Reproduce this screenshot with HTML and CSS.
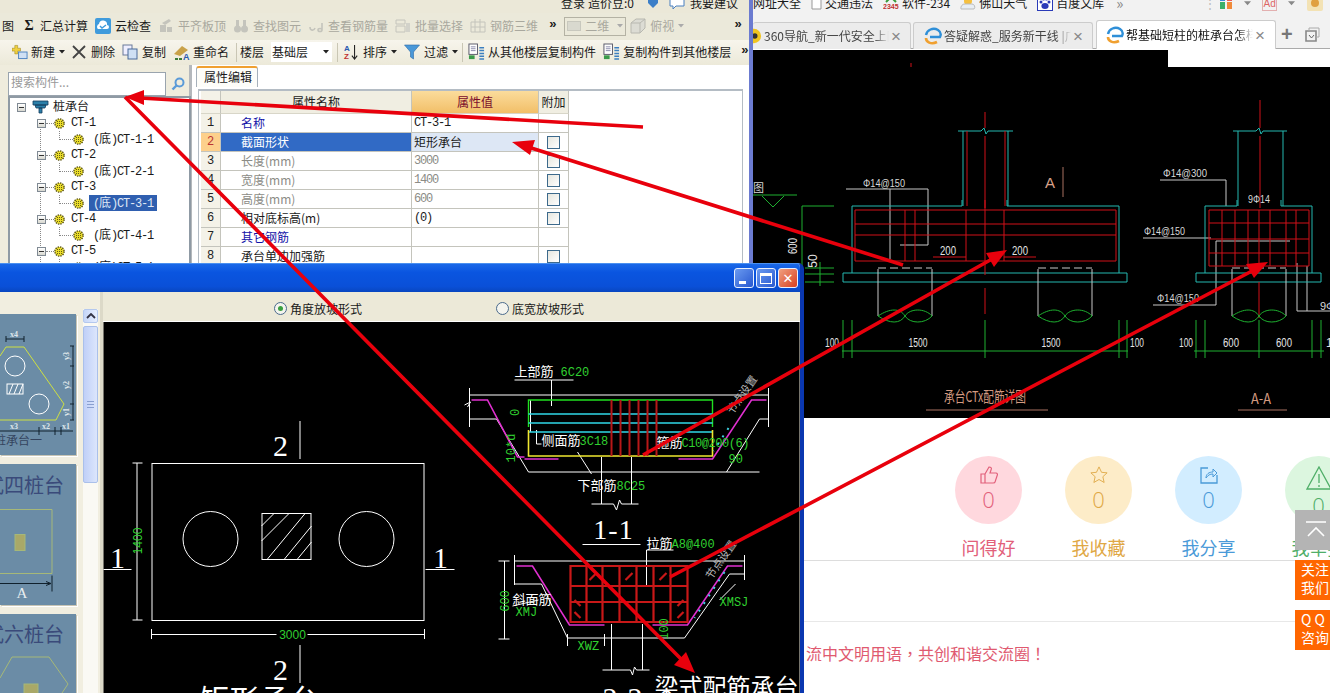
FILE: index.html
```html
<!DOCTYPE html>
<html lang="zh">
<head>
<meta charset="utf-8">
<title>桩承台</title>
<link rel="stylesheet" href="styles.css">
</head>
<body>
<svg class="defs" aria-hidden="true">
  <symbol id="gear" viewBox="0 0 11 11"><circle cx="5.5" cy="5.5" r="4.6" fill="#e9dc2a" stroke="#5a5212" stroke-width="1.4" stroke-dasharray="1.4 1"/><path d="M3 3.5h5M3 5.5h5M3 7.5h5M3.5 3v5M5.5 3v5M7.5 3v5" stroke="#5a5212" stroke-width=".7" stroke-dasharray="1 1"/></symbol>
  <symbol id="ie" viewBox="0 0 18 18"><path d="M2 8C3 3 9 0 14 3c3 2 3 5 2 7H6" fill="none" stroke="#2f8fd8" stroke-width="2.4"/><path d="M2 11c0 4 5 7 11 4" fill="none" stroke="#f0a030" stroke-width="2.6"/></symbol>
  <symbol id="caret" viewBox="0 0 6 4"><path d="M0 0h6L3 3.5z" fill="#222"/></symbol>
  <symbol id="copyfloor" viewBox="0 0 18 20"><rect x="1" y="1" width="9" height="11" fill="#fff" stroke="#556"/><path d="M3 4h5M3 6h5M3 8h5" stroke="#88a"/><rect x="1" y="13" width="6" height="4" fill="#3a9a4a"/><path d="M12 5h5M12 8h5M12 11h5M12 14h5M12 17h5" stroke="#3c7fc0" stroke-width="1.6"/></symbol>
</svg>

<section class="app-window">
  <div class="app-strip">
    <div class="app-strip-row">
      <span>登录</span><span class="strip-cost">造价豆:0</span>
      <svg class="strip-ic" viewBox="0 0 12 12"><path d="M1 1h10v5l-5 5-5-5z" fill="#3c7fc8"/></svg>
      <svg class="strip-ic2" viewBox="0 0 16 14"><path d="M1 1h14v9H7l-3 3v-3H1z" fill="#fff" stroke="#4a80c0"/></svg>
      <span>我要建议</span>
    </div>
  </div>

  <div class="tb tb-one">
    <span class="t-first">图</span>
    <span class="ti"><b class="sigma">Σ</b>汇总计算</span>
    <span class="ti"><svg class="i16" viewBox="0 0 16 16"><rect width="16" height="16" rx="2" fill="#3f9bdc"/><path d="M3 11a3 3 0 0 1 1-5 4 4 0 0 1 8 1 2 2 0 0 1 0 4z" fill="#fff"/><path d="M5 8l2 2 4-3" fill="none" stroke="#3f9bdc" stroke-width="1.4"/></svg>云检查</span>
    <span class="ti off"><svg class="i16" viewBox="0 0 16 16"><path d="M2 14V7h6v7zM9 14V9h5v5zM4 5l7-4 2 2-6 4z" fill="#c4c4bc"/></svg>平齐板顶</span>
    <span class="ti off"><svg class="i16" viewBox="0 0 16 16"><circle cx="4.5" cy="11" r="3.5" fill="#c4c4bc"/><circle cx="11.5" cy="11" r="3.5" fill="#c4c4bc"/><rect x="3" y="2" width="3" height="7" fill="#c4c4bc"/><rect x="10" y="2" width="3" height="7" fill="#c4c4bc"/></svg>查找图元</span>
    <span class="ti off"><svg class="i16" viewBox="0 0 16 16"><path d="M2 9c0 4 4 4 5 1M14 5v7c0 2-4 2-4 0s4-2 4 0" fill="none" stroke="#c4c4bc" stroke-width="1.6"/></svg>查看钢筋量</span>
    <span class="ti off"><svg class="i16" viewBox="0 0 16 16"><path d="M1 2h9v4H1zM1 8h9v6H1z" fill="none" stroke="#c4c4bc"/><path d="M11 5h4v9h-4z" fill="#d2d2ca"/></svg>批量选择</span>
    <span class="ti off"><svg class="i16" viewBox="0 0 16 16"><path d="M1 4h14v10H1zM5 1v13M10 1v13M1 9h14" fill="none" stroke="#c4c4bc"/></svg>钢筋三维</span>
    <span class="chev chev-a">»</span>
    <span class="combo-2d off"><i class="swatch"></i>二维<svg class="car" viewBox="0 0 6 4"><path d="M0 0h6L3 3.5z" fill="#aaa"/></svg></span>
    <span class="ti off ti-view"><svg class="i16" viewBox="0 0 16 16"><path d="M1 5l5-4h9v9l-5 5H1zM1 5h9v10M10 5l5-4" fill="#dcdcd4" stroke="#b8b8b0"/></svg>俯视<svg class="car" viewBox="0 0 6 4"><path d="M0 0h6L3 3.5z" fill="#aaa"/></svg></span>
    <span class="chev chev-b">»</span>
  </div>

  <div class="tb tb-two">
    <span class="ti ti-new"><svg class="i16" viewBox="0 0 17 16"><path d="M3 1h3v3h3v3H6v3H3V7H0V4h3z" fill="#f0d040" stroke="#a08a20" stroke-width=".6"/><rect x="7" y="8" width="9" height="7" fill="#cfe0f4" stroke="#4a80c0"/></svg>新建<svg class="car" viewBox="0 0 6 4"><use href="#caret"/></svg></span>
    <span class="ti ti-del"><svg class="i16" viewBox="0 0 16 16"><path d="M2 2l12 12M14 2L2 14" stroke="#444" stroke-width="1.8"/></svg>删除</span>
    <span class="ti"><svg class="i16" viewBox="0 0 16 16"><rect x="1" y="1" width="9" height="10" fill="#eef" stroke="#6a7a9a"/><rect x="6" y="5" width="9" height="10" fill="#cfe0f4" stroke="#4a6a9a"/></svg>复制</span>
    <span class="ti ti-ren"><svg class="i17" viewBox="0 0 17 17"><path d="M1 10L9 2l6 4-8 6z" fill="#c9a24a"/><path d="M2 15h3M6 15h3" stroke="#3a7a3a" stroke-width="2"/><text x="10" y="16" class="ic-a">A</text></svg>重命名</span>
    <i class="sep"></i>
    <span class="floor-lbl">楼层</span>
    <span class="combo-floor">基础层<svg class="car" viewBox="0 0 6 4"><use href="#caret"/></svg></span>
    <i class="sep sep-b"></i>
    <span class="ti ti-sort"><svg class="i16" viewBox="0 0 16 18"><text x="0" y="8" class="ic-az-a">A</text><text x="0" y="17" class="ic-az-z">Z</text><path d="M12 1v15M9 13l3 4 3-4" fill="none" stroke="#222" stroke-width="1.2"/></svg>排序<svg class="car" viewBox="0 0 6 4"><use href="#caret"/></svg></span>
    <span class="ti"><svg class="i16" viewBox="0 0 15 16"><path d="M0 1h15L9 8v7l-3-2V8z" fill="#4a98d8" stroke="#2a6aa8" stroke-width=".6"/></svg>过滤<svg class="car" viewBox="0 0 6 4"><use href="#caret"/></svg></span>
    <i class="sep sep-c"></i>
    <span class="ti ti-tight ti-from"><svg class="i17" viewBox="0 0 18 20"><use href="#copyfloor"/></svg>从其他楼层复制构件</span>
    <span class="ti ti-tight"><svg class="i17" viewBox="0 0 18 20"><use href="#copyfloor"/></svg>复制构件到其他楼层</span>
    <span class="chev chev-c">»</span>
  </div>

  <div class="app-body">
    <aside class="side">
      <div class="search"><span class="search-box">搜索构件...</span>
        <svg class="search-ic" viewBox="0 0 14 14"><circle cx="8.5" cy="5.5" r="4" fill="none" stroke="#5a9ad8" stroke-width="2"/><path d="M5.5 8.5L1.5 12.5" stroke="#5a9ad8" stroke-width="2.4"/></svg>
      </div>
      <div class="tree">
        <div class="node root"><i class="exp"></i><svg class="root-ic" viewBox="0 0 17 14"><path d="M1 1h15v4H1zM3 5h11l-1 3H4zM7 8h3v5H7z" fill="#2b7fa8" stroke="#123a5a" stroke-width=".8"/></svg><span>桩承台</span></div>
        <div class="node par"><i class="exp"></i><i class="dot"></i><svg class="gear"><use href="#gear"/></svg><span class="m">CT-1</span></div>
        <div class="node kid"><i class="conn"></i><svg class="gear"><use href="#gear"/></svg><span class="lbl"><span class="m">(</span>底<span class="m">)CT-1-1</span></span></div>
        <div class="node par"><i class="exp"></i><i class="dot"></i><svg class="gear"><use href="#gear"/></svg><span class="m">CT-2</span></div>
        <div class="node kid"><i class="conn"></i><svg class="gear"><use href="#gear"/></svg><span class="lbl"><span class="m">(</span>底<span class="m">)CT-2-1</span></span></div>
        <div class="node par"><i class="exp"></i><i class="dot"></i><svg class="gear"><use href="#gear"/></svg><span class="m">CT-3</span></div>
        <div class="node kid"><i class="conn"></i><svg class="gear"><use href="#gear"/></svg><span class="lbl sel"><span class="m">(</span>底<span class="m">)CT-3-1</span></span></div>
        <div class="node par"><i class="exp"></i><i class="dot"></i><svg class="gear"><use href="#gear"/></svg><span class="m">CT-4</span></div>
        <div class="node kid"><i class="conn"></i><svg class="gear"><use href="#gear"/></svg><span class="lbl"><span class="m">(</span>底<span class="m">)CT-4-1</span></span></div>
        <div class="node par"><i class="exp"></i><i class="dot"></i><svg class="gear"><use href="#gear"/></svg><span class="m">CT-5</span></div>
        <div class="node kid"><i class="conn"></i><svg class="gear"><use href="#gear"/></svg><span class="lbl"><span class="m">(</span>底<span class="m">)CT-5-1</span></span></div>
      </div>
    </aside>
    <main class="props">
      <div class="props-tab">属性编辑</div>
      <div class="props-panel">
        <div class="grid">
          <div class="c hd num"></div><div class="c hd">属性名称</div><div class="c hd hd-val">属性值</div><div class="c hd">附加</div>
          <div class="c num">1</div><div class="c name blue">名称</div><div class="c val">CT-3-1</div><div class="c"></div>
          <div class="c num cur">2</div><div class="c name picked">截面形状</div><div class="c val val-sel">矩形承台</div><div class="c"><i class="chk"></i></div>
          <div class="c num">3</div><div class="c name grey">长度(mm)</div><div class="c val grey">3000</div><div class="c"><i class="chk"></i></div>
          <div class="c num">4</div><div class="c name grey">宽度(mm)</div><div class="c val grey">1400</div><div class="c"><i class="chk"></i></div>
          <div class="c num">5</div><div class="c name grey">高度(mm)</div><div class="c val grey">600</div><div class="c"><i class="chk"></i></div>
          <div class="c num">6</div><div class="c name">相对底标高(m)</div><div class="c val">(0)</div><div class="c"><i class="chk"></i></div>
          <div class="c num">7</div><div class="c name blue">其它钢筋</div><div class="c val"></div><div class="c"></div>
          <div class="c num">8</div><div class="c name">承台单边加强筋</div><div class="c val"></div><div class="c"><i class="chk"></i></div>
        </div>
      </div>
    </main>
  </div>
</section>

<section class="browser">
  <div class="bm">
    <div class="bm-row">
      <span class="b1">网址大全</span>
      <span class="bi"><svg class="i12" viewBox="0 0 11 14"><path d="M1 1h6l3 3v9H1z" fill="#fff" stroke="#999"/></svg>交通违法</span>
      <span class="bi"><svg class="i16" viewBox="0 0 16 14"><text x="0" y="13" class="ic-2345">2345</text><path d="M3 6l5-5 5 5" fill="none" stroke="#3a9a3a" stroke-width="2"/></svg>软件-234</span>
      <span class="bi"><svg class="i16" viewBox="0 0 16 14"><circle cx="8" cy="5" r="4" fill="#f5c040"/><path d="M1 13a4 4 0 0 1 4-5h7a3 3 0 0 1 2 5z" fill="#e8eef4" stroke="#bbb"/></svg>佛山天气</span>
      <span class="bi"><svg class="i16" viewBox="0 0 16 16"><rect x=".5" y=".5" width="15" height="15" fill="#fff" stroke="#2a3ab8"/><ellipse cx="8" cy="11" rx="3.6" ry="3" fill="#2a3ab8"/><circle cx="4" cy="7" r="1.5" fill="#2a3ab8"/><circle cx="12" cy="7" r="1.5" fill="#2a3ab8"/><circle cx="6.5" cy="4" r="1.5" fill="#2a3ab8"/><circle cx="9.5" cy="4" r="1.5" fill="#2a3ab8"/></svg>百度文库</span>
      <span class="bm-more">»</span>
      <span class="bm-dots">⋮</span>
      <svg class="i14" viewBox="0 0 14 14"><rect x="1" y="6" width="5" height="7" fill="#3ab06a"/><rect x="8" y="6" width="5" height="7" fill="#f08a3a"/><rect x="1" y="1" width="5" height="4" fill="#3a8ad8"/><rect x="8" y="1" width="5" height="4" fill="#e85a5a"/></svg>
      <svg class="bm-car" viewBox="0 0 6 4"><path d="M0 0h6L3 3.5z" fill="#888"/></svg>
      <span class="ad">Ad</span>
      <svg class="bm-car" viewBox="0 0 6 4"><path d="M0 0h6L3 3.5z" fill="#888"/></svg>
      <svg class="i16 bm-last" viewBox="0 0 16 16"><rect width="16" height="16" rx="2" fill="#f3e2b4"/><circle cx="8" cy="8" r="4" fill="#e0a040"/></svg>
    </div>
  </div>
  <div class="tabs">
    <div class="tab tab-a"><svg class="tab-360" viewBox="0 0 10 18"><circle cx="1" cy="9" r="8" fill="#f0c420"/><circle cx="2" cy="9" r="3" fill="#333"/></svg><span class="tab-t tab-t-a">360导航_新一代安全上网</span><span class="x">×</span></div>
    <div class="tab tab-b"><svg class="tab-ie"><use href="#ie"/></svg><span class="tab-t tab-t-b">答疑解惑_服务新干线 |广</span><span class="x">×</span></div>
    <div class="tab tab-c"><svg class="tab-ie"><use href="#ie"/></svg><span class="tab-t tab-t-c">帮基础短柱的桩承台怎样</span><span class="x">×</span></div>
    <span class="tab-plus">+</span>
    <svg class="tab-restore" viewBox="0 0 15 15"><path d="M1 4h10v10H1z" fill="none" stroke="#888" stroke-width="1.6"/><path d="M4 4V1h10v9h-3" fill="none" stroke="#aaa"/><path d="M4 8l2.500 3 2.500-3" fill="none" stroke="#666"/></svg>
  </div>

  <svg class="cad-a" viewBox="753 50 577 368" role="img" aria-label="承台配筋详图">
    <rect x="753" y="50" width="577" height="368" fill="#000"/>
    <rect x="1168" y="50" width="162" height="17" fill="#fff"/>
    <path class="red" d="M911 63v4M985 112v16M985 136v72M1260 100v28M1260 136v72"/>
    <path class="cy" d="M958 131h23l3-3 2 6 2-3h25M963 131v75M1008 131v75M1233 131h23l3-3 2 6 2-3h24M1238 131v75M1283 131v75"/>
    <path class="red" d="M967 131v75M1005 131v75"/>
    <text class="t-sal" x="1045" y="188">A</text>
    <path class="sal" d="M1063 167v30M926 410h122M1238 410h49"/>
    <path class="gr" d="M846 189h82v56h-28M890 189v70M1160 180h66v26M1143 238h68M1216 241h74M1216 241v64h-63M1297 263v48h33M1307 266v45"/>
    <text class="t-w" x="863" y="187" textLength="42" lengthAdjust="spacingAndGlyphs">Φ14@150</text>
    <text class="t-w" x="1163" y="177" textLength="44" lengthAdjust="spacingAndGlyphs">Φ14@300</text>
    <text class="t-w" x="1248" y="203" textLength="22" lengthAdjust="spacingAndGlyphs">9Φ14</text>
    <text class="t-w" x="1144" y="235" textLength="41" lengthAdjust="spacingAndGlyphs">Φ14@150</text>
    <text class="t-w" x="1157" y="302" textLength="42" lengthAdjust="spacingAndGlyphs">Φ14@150</text>
    <text class="t-w" x="1320" y="310">9Φ1</text>
    <text class="t-w" x="753" y="192">图</text>

    <path class="cy" d="M852 273v-67h110v-6M1007 200v6h112v67M843 273h284v9H843zM1205 273v-67h32v-6M1281 200v6h31v67M1196 273h125v9h-125z"/>
    <path class="red" d="M855 210h261v51H855zM855 224h261M855 235h261M905 210v51M915 210v51M966 210v51M1004 210v51M985 200v75M933 257h33M1004 257h32"/>
    <path class="red" d="M1209 210h100v56h-100zM1209 223h100M1209 239h100M1209 253h100M1222 210v56M1235 210v56M1248 210v56M1259 210v56M1270 210v56M1286 210v56M1296 210v56"/>
    <path class="red" d="M985 288v26M1259 282v36"/>
    <path class="gr" d="M878 269v47M932 269v47M1038 269v47M1092 269v47M1232 269v47M1286 269v47"/>
    <path class="gr dash" d="M878 268h54M1038 268h54M1232 268h54"/>
    <path class="gn" d="M878 316c12-8 22-8 27 0s20 8 27 0M878 316c12 8 22 8 27 0s20-8 27 0M1038 316c12-8 22-8 27 0s20 8 27 0M1038 316c12 8 22 8 27 0s20-8 27 0M1232 316c12-8 22-8 27 0s20 8 27 0M1232 316c12 8 22 8 27 0s20-8 27 0"/>
    <path class="gn" d="M842 351h286M843 320v38M852 320v38M985 320v38M1119 320v38M1127 320v38M1194 351h130M1196 320v38M1205 320v38M1259 320v38M1312 320v38M1321 320v38M753 195h44M762 196l11 11 11-11M802 206v80M802 206h32M805 268h29M805 274h29M805 282h29M820 262v24"/>
    <text class="t-dim" x="832" y="347" text-anchor="middle" textLength="14" lengthAdjust="spacingAndGlyphs">100</text>
    <text class="t-dim" x="918" y="347" text-anchor="middle" textLength="19" lengthAdjust="spacingAndGlyphs">1500</text>
    <text class="t-dim" x="1051" y="347" text-anchor="middle" textLength="19" lengthAdjust="spacingAndGlyphs">1500</text>
    <text class="t-dim" x="1137" y="347" text-anchor="middle" textLength="14" lengthAdjust="spacingAndGlyphs">100</text>
    <text class="t-dim" x="1186" y="347" text-anchor="middle" textLength="14" lengthAdjust="spacingAndGlyphs">100</text>
    <text class="t-dim" x="1231" y="347" text-anchor="middle" textLength="16" lengthAdjust="spacingAndGlyphs">600</text>
    <text class="t-dim" x="1284" y="347" text-anchor="middle" textLength="16" lengthAdjust="spacingAndGlyphs">600</text>
    <text class="t-dim" x="1326" y="347">100</text>
    <text class="t-dim" x="948" y="255" text-anchor="middle" textLength="16" lengthAdjust="spacingAndGlyphs">200</text>
    <text class="t-dim" x="1020" y="255" text-anchor="middle" textLength="16" lengthAdjust="spacingAndGlyphs">200</text>
    <text class="t-dim" transform="translate(797 246) rotate(-90)" text-anchor="middle" textLength="16" lengthAdjust="spacingAndGlyphs">600</text>
    <text class="t-dim" transform="translate(817 261) rotate(-90)" text-anchor="middle">50</text>
    <text class="t-sal2" x="944" y="402" textLength="82" lengthAdjust="spacingAndGlyphs">承台CTx配筋详图</text>
    <text class="t-sal2" x="1251" y="404" textLength="20" lengthAdjust="spacingAndGlyphs">A-A</text>
  </svg>

  <div class="react-row">
    <div class="react r-pink"><div class="disc"><svg class="react-ic" viewBox="0 0 18 18"><path d="M1 8h4v9H1zM5 8l4-7c2 0 3 1 2 3l-1 3h6c1 0 2 1 1 3l-2 6c0 1-1 1-2 1H5" fill="none" stroke="currentColor" stroke-width="1.200"/></svg><span class="zero">0</span></div><span class="react-lbl">问得好</span></div>
    <div class="react r-yel"><div class="disc"><svg class="react-ic" viewBox="0 0 20 20"><path d="M10 1l2.800 6 6.200.6-4.700 4.300 1.400 6.400L10 15l-5.700 3.300 1.400-6.400L1 7.600 7.200 7z" fill="none" stroke="currentColor"/></svg><span class="zero">0</span></div><span class="react-lbl">我收藏</span></div>
    <div class="react r-blu"><div class="disc"><svg class="react-ic" viewBox="0 0 18 18"><path d="M8 2H1v15h16V9" fill="none" stroke="currentColor" stroke-width="1.300"/><path d="M6 12c0-4 3-6 7-6V3l4 4-4 4V8c-3 0-5 1-7 4z" fill="none" stroke="currentColor"/></svg><span class="zero">0</span></div><span class="react-lbl">我分享</span></div>
    <div class="react r-grn"><div class="disc"><svg class="warn-ic" viewBox="0 0 26 24"><path d="M13 1l12 22H1zM13 8v9M13 19v2" fill="none" stroke="currentColor" stroke-width="1.300"/></svg><span class="zero">0</span></div><span class="react-lbl">我举报</span></div>
  </div>
  <div class="empty-band"></div>
  <p class="civil" lang="zh-TW">流中文明用语，共创和谐交流圈！</p>
</section>

<aside class="float-btns">
  <span class="fb fb-top"><svg viewBox="0 0 22 18"><path d="M1 1h20M3 15l8-8 8 8" fill="none" stroke="#fff" stroke-width="1.600"/></svg></span>
  <span class="fb fb-or">关注<br>我们</span>
  <span class="fb fb-or">Q Q<br>咨询</span>
</aside>

<section class="dialog">
  <header class="dlg-title">
    <span class="wbtn"><i class="wb-min"></i></span>
    <span class="wbtn"><i class="wb-max"></i></span>
    <span class="wbtn wbtn-x">✕</span>
  </header>
  <div class="dlg-body">
    <div class="pick">
      <div class="thumbs">
        <div class="thumb">
          <svg viewBox="0 314 76 141">
            <path class="lime" d="M0 356l6-9h18l40 57-8 16H0"/>
            <circle class="cw1" cx="15" cy="366" r="10"/><circle class="cw1" cx="39" cy="404" r="10"/>
            <rect class="cw1" x="7" y="384" width="16" height="10"/><path class="cw1" d="M9 394l4-10M14 394l4-10M19 394l4-10"/>
            <path class="bk" d="M6 339h18M6 336v6M24 336v6M73 346v74M70 346h4M70 366h4M70 404h4M70 420h4M0 431h73M39 427v8M55 427v8M61 427v8"/>
            <text class="t-th" x="10" y="337">x4</text><text class="t-th" x="10" y="429">x3</text><text class="t-th" x="42" y="429">x2</text><text class="t-th" x="62" y="429">x1</text>
            <text class="t-th" transform="translate(69 360) rotate(-90)">y3</text><text class="t-th" transform="translate(69 389) rotate(-90)">y2</text><text class="t-th" transform="translate(69 416) rotate(-90)">y1</text>
            <text class="t-cap" x="42" y="445" text-anchor="end">三桩承台一</text>
          </svg>
        </div>
        <div class="thumb">
          <svg viewBox="0 464 76 140">
            <text class="t-big" x="64" y="492" text-anchor="end">式四桩台</text>
            <path class="lime2" d="M0 509h52v64H0"/>
            <rect class="hatch" x="15" y="534" width="10" height="16"/>
            <path class="bk" d="M0 583h50M46 581l5 2-5 2M52 575v16"/>
            <text class="t-a" x="22" y="597" text-anchor="middle">A</text>
          </svg>
        </div>
        <div class="thumb thumb-last">
          <svg viewBox="0 614 76 79">
            <text class="t-big" x="64" y="642" text-anchor="end">式六桩台</text>
            <path class="lime2" d="M0 678l12-21h37l19 27-8 12"/>
            <rect class="hatch" x="24" y="684" width="14" height="12"/>
          </svg>
        </div>
      </div>
      <div class="vscroll">
        <span class="vs-up"><svg viewBox="0 0 10 6"><path d="M1 5l4-4 4 4" fill="none" stroke="#334" stroke-width="1.800"/></svg></span>
        <span class="vs-thumb"><i></i></span>
      </div>
    </div>
    <div class="dlg-main">
      <div class="radios">
        <label class="radio"><i class="rd rd-on"></i>角度放坡形式</label>
        <label class="radio"><i class="rd"></i>底宽放坡形式</label>
      </div>
      <svg class="cad-b" viewBox="104 322 696 371" role="img" aria-label="矩形承台与梁式配筋承台">
        <rect x="104" y="322" width="696" height="371" fill="#000"/>
        <rect class="wl" x="152.500" y="463.500" width="272" height="157"/>
        <circle class="wl" cx="211" cy="539" r="27.500"/><circle class="wl" cx="367" cy="539" r="27.500"/>
        <rect class="wl" x="262.500" y="513.500" width="49" height="46"/>
        <path class="wl" d="M262 526l13-13M262 541l28-28M268 559l38-46M285 559l27-33M298 559l14-17"/>
        <path class="wl" d="M300.500 421v38M300.500 645v38M104 569.500h28M426 569.500h29M137.500 463v157M133 463h10M133 620h10M152 634.500h125M308 634.500h117M152 629v10M425 629v10"/>
        <text class="t-ser" x="281" y="456" text-anchor="middle">2</text>
        <text class="t-ser" x="281" y="680" text-anchor="middle">2</text>
        <text class="t-ser" x="118" y="568" text-anchor="middle">1</text>
        <text class="t-ser" x="441" y="568" text-anchor="middle">1</text>
        <text class="g-dim" transform="translate(142 541) rotate(-90)" text-anchor="middle">1400</text>
        <text class="g-dim" x="293" y="639" text-anchor="middle">3000</text>
        <text class="w-title" x="200" y="711">矩形承台</text>

        <path class="wl" d="M515 380h37M552 380h22M552 380v26M470 395h299M470 388v39M769 388v39M465 405l6-3-3 5M470 419h27l32 53h231M727 472l33-53h9M531 432v-32M592 504h22l3 6 3-10 2 4h17M602 457v47M632 457v47M583 544.500h58M647 550h27M647 550v35M542 444h-5v-14M578 452l14 22M515 561h230M515 555v30M745 555v25M505 561v78M499 561h11M499 639h11M515 584h27l26 54h117l45-64h15M612 624v46M643 624v46M603 670h28l2 5 2-8 2 3h13M513 606l26-6M568 634v12M605 634v12M720 600l16-16"/>
        <path class="magenta" d="M472 400h16l30 57h7M525 459h34M679 459h34l39-59h15M517 566h16l37 59h35M653 625h35l40-59h15"/>
        <path class="lgreen" d="M529 427v-27h184v27"/>
        <path class="cyan2" d="M529 414h184M529 423h184M529 432h184"/>
        <path class="yellow" d="M529 430v26h184v-26"/>
        <path class="red2" d="M612 400v56M621 400v56M630 400v56M639 400v56M648 400v56M657 400v56"/>
        <path class="red3" d="M571 566h117v56H571zM571 586h117M571 602h117M587 566v56M603 566v56M620 566v56M637 566v56M654 566v56M671 566v56M590 580l7-7M626 580l7-7M660 580l7-7M575 600l6 6M684 600l-6 6M575 612l6 6M684 612l-6 6"/>
        <text class="w-cn" x="515" y="376">上部筋</text><text class="g-cn" x="561" y="376">6C20</text>
        <text class="w-cn" x="542" y="445">侧面筋</text><text class="g-cn" x="580" y="445">3C18</text>
        <text class="w-cn" x="657" y="447">箍筋</text><text class="g-cn" x="682" y="447" textLength="68">C10@200(6)</text>
        <text class="g-cn" x="729" y="463">90</text>
        <text class="w-cn" x="578" y="490">下部筋</text><text class="g-cn" x="617" y="490">8C25</text>
        <text class="t-ser11" x="614" y="539" text-anchor="middle">1-1</text>
        <text class="w-cn" x="647" y="548">拉筋</text><text class="g-cn" x="672" y="548">A8@400</text>
        <text class="w-cn" x="513" y="604">斜面筋</text><text class="g-cn" x="516" y="616">XMJ</text>
        <text class="g-cn" x="720" y="606">XMSJ</text><text class="g-cn" x="578" y="650">XWZ</text>
        <text class="g-cn" transform="translate(509 601) rotate(-90)" text-anchor="middle">600</text>
        <text class="g-cn" transform="translate(515 448) rotate(-90)" text-anchor="middle">10*d</text>
        <text class="g-cn" transform="translate(519 416) rotate(-90)">0</text>
        <text class="g-cn" transform="translate(668 629) rotate(-90)" text-anchor="middle">100</text>
        <text class="t-node" transform="translate(733 415) rotate(-55)">节点设置</text>
        <text class="t-node" transform="translate(712 580) rotate(-55)">节点设置</text>
        <path class="dots" d="M729 428l-15 23M725 572l-30 46"/>
        <text class="w-t2" x="655" y="696">梁式配筋承台</text>
        <text class="w-t3" x="603" y="708">2-2</text>
      </svg>
    </div>
  </div>
</section>

<svg class="arrows" viewBox="0 0 1330 693" aria-hidden="true">
  <path class="ar" d="M643 127L140 98M125 97L683 661M903 265L528 147M643 455L992 259M670 577L1252 271"/>
  <path class="arh" d="M125 97L144 90L144 105zM695 673L674 665L686 652zM512 142L535 140L530 155zM1007 250L986 253L994 267zM1268 262L1246 264L1254 278z"/>
</svg>
</body>
</html>
```
FILE: styles.css
```css
* { box-sizing: border-box; }
html, body { margin: 0; height: 693px; overflow: hidden; background: #fff; }
body { position: relative; width: 1330px; font: 12px/16px "Noto Sans CJK SC", "Liberation Sans", sans-serif; color: #1a1a1a; }
i { display: block; font-style: normal; }
.defs { display: none; }
svg { display: block; flex: none; }
.i12 { width: 11px; height: 14px; }
.i14 { width: 14px; height: 14px; }
.i16 { width: 16px; height: 16px; }
.i17 { width: 17px; height: 19px; }
.car { width: 6px; height: 4px; margin-left: 4px; }
.m { font-family: "Liberation Mono", monospace; letter-spacing: -1.2px; }

/* back application window */
.app-window { position: absolute; left: 0; top: 0; width: 753px; height: 263px; background: #efecdd; border-right: 4px solid #6b7bd0; overflow: hidden; }
.app-strip { height: 13px; background: #ebe8d8; overflow: hidden; }
.app-strip-row { display: flex; align-items: center; height: 14px; margin-top: -4px; padding-left: 561px; }
.strip-cost { margin: 0 13px 0 3px; }
.strip-ic { width: 12px; height: 12px; margin-right: 10px; }
.strip-ic2 { width: 16px; height: 14px; margin-right: 5px; }
.tb { display: flex; align-items: center; white-space: nowrap; }
.ti { display: flex; align-items: center; gap: 4px; }
.ti .car { margin-left: 0; }
.off { color: #a9a89e; }
.tb-one { height: 27px; gap: 7px; padding: 0 0 1px 2px; background: #ebe9da; }
.t-first { margin-right: 1px; }
.sigma { width: 14px; font: bold 14px "Liberation Serif", serif; text-align: center; }
.chev { font: bold 13px "Liberation Sans", sans-serif; margin-top: -5px; }
.chev-a { margin-left: 4px; }
.combo-2d { display: flex; align-items: center; gap: 4px; width: 62px; height: 19px; margin-left: 1px; border: 1px solid #b4b2a4; padding-left: 2px; }
.swatch { width: 14px; height: 10px; background: #d9d9cf; border: 1px solid #c8c8be; }
.ti-view { margin-left: -3px; }
.chev-b { margin-left: 43px; }
.tb-two { height: 25px; padding: 0 0 1px 12px; gap: 7px; background: linear-gradient(#f7f5ec, #ece9d9); }
.ti-new { gap: 3px; }
.ti-new .car { margin-left: 1px; }
.ti-del { margin-left: -1px; }
.ti-ren { gap: 3px; }
.sep { width: 1px; height: 19px; background: #c9c6b4; }
.floor-lbl { margin-left: -4px; }
.combo-floor { display: flex; align-items: center; justify-content: space-between; width: 61px; height: 20px; background: #fff; padding: 0 3px 0 1px; }
.sep-b { margin-left: -2px; }
.ti-sort { margin-left: -2px; }
.sep-c { margin-left: -3px; }
.ti-from { margin-left: -2px; }
.ti-tight { gap: 3px; }
.chev-c { margin-left: 3px; }
.app-body { display: flex; height: 198px; background: #efecdd; }
.side { width: 192px; padding: 6px 0 0 8px; border-right: 3px solid #b4b8bc; flex: none; }
.search { display: flex; align-items: center; gap: 4px; height: 25px; width: 183px; }
.search-box { display: flex; align-items: center; width: 158px; height: 24px; background: #fff; border: 1px solid #9aa4ae; color: #999; padding: 0 2px 3px; }
.search-ic { width: 14px; height: 14px; margin-left: 1px; }
.tree { position: relative; width: 183px; height: 170px; background: #fff; border: 2px solid #8f9aa4; border-bottom: 0; padding-top: 1px; overflow: hidden; }
.tree::before { content: ""; position: absolute; left: 30px; top: 22px; height: 150px; border-left: 1px dotted #888; }
.node { display: flex; align-items: center; height: 16px; white-space: nowrap; position: relative; }
.exp { width: 9px; height: 9px; border: 1px solid #808a94; background: linear-gradient(#fff, #d8d8d0); position: relative; flex: none; z-index: 1; }
.exp::after { content: ""; position: absolute; left: 1px; right: 1px; top: 3px; height: 1px; background: #333; }
.gear { width: 11px; height: 11px; }
.root { padding-left: 7px; }
.root span { line-height: 13px; height: 16px; }
.root-ic { width: 17px; height: 14px; margin: 0 4px 0 6px; }
.par { padding-left: 27px; }
.dot { width: 8px; border-top: 1px dotted #888; }
.par .m { margin-left: 6px; }
.kid { padding-left: 49px; }
.conn { width: 14px; height: 9px; margin-top: -8px; border-left: 1px dotted #888; border-bottom: 1px dotted #888; }
.lbl { margin-left: 5px; padding: 0 4px; height: 16px; line-height: 13px; }
.sel { background: #2f5fb0; color: #dfe7f5; }
.props { flex: 1; min-width: 0; padding: 1px 0 0 4px; background: #fff; }
.props-tab { width: 62px; height: 21px; background: #fdfdf9; border: 1px solid #a6b0ba; border-top: 2px solid #f0a030; border-bottom: 0; border-radius: 3px 3px 0 0; padding: 1px 0 0 7px; }
.props-panel { height: 177px; margin: 2px 6px 0 2px; padding-left: 2px; border: 1px solid #b4bcc4; border-bottom: 0; border-top-width: 2px; overflow: hidden; background: #fff; }
.grid { display: grid; width: 368px; grid-template-columns: 20px 191px 127px 30px; grid-template-rows: 23px repeat(8, 19px); }
.c { border-right: 1px solid #c4c4bc; border-bottom: 1px solid #c4c4bc; display: flex; align-items: center; justify-content: center; white-space: nowrap; }
.hd { background: #f0eee2; font-size: 12px; border-bottom-color: #d8d6c8; }
.hd-val { background: linear-gradient(#fbdc9c, #f2bf68); color: #7a0c2c; }
.num { background: #f4f2e8; color: #222; font-family: "Liberation Mono", monospace; }
.cur { background: #fdd08c; color: #b33; }
.name { justify-content: flex-start; padding-left: 20px; }
.val { justify-content: flex-start; padding-left: 2px; font-family: "Liberation Mono", monospace; letter-spacing: -1.2px; }
.val-sel { background: #dde7f5; font-family: "Noto Sans CJK SC", sans-serif; letter-spacing: 0; }
.blue { color: #1313a8; }
.grey { color: #8c8c86; }
.picked { background: #316ac5; color: #fff; }
.chk { width: 13px; height: 13px; border: 1px solid #3d6a8c; background: linear-gradient(135deg, #e6e6de, #fff); }

/* browser */
.browser { position: absolute; left: 753px; top: 0; width: 577px; height: 693px; background: #fff; overflow: hidden; }
.bm { height: 20px; background: #f2f2f2; overflow: hidden; font-size: 12px; }
.bm-row { display: flex; align-items: center; height: 14px; margin-top: -4px; white-space: nowrap; }
.b1 { margin-right: 10px; }
.bi { display: flex; align-items: center; gap: 3px; margin-right: 10px; }
.bm-more { margin-left: 2px; font-size: 15px; color: #888; width: 88px; }
.bm-dots { width: 15px; color: #bbb; }
.bm-car { width: 7px; height: 5px; margin: 0 11px; }
.ad { width: 15px; height: 15px; font: 10px/14px "Liberation Sans", sans-serif; color: #d66; border: 1px solid #e3b0b0; text-align: center; }
.bm-last { margin-left: 1px; }
.tabs { display: flex; align-items: flex-end; height: 30px; padding-bottom: 1px; background: linear-gradient(#f2f2f2 0, #f2f2f2 28px, #aaa 28px, #aaa 29px, #fff 29px); }
.tab { display: flex; align-items: center; height: 27px; font-size: 12px; color: #444; background: #ececec; border: 1px solid #ccc; border-bottom: 0; border-radius: 3px 3px 0 0; white-space: nowrap; }
.tab-a { width: 158px; margin-right: 2px; border-left: 0; }
.tab-b { width: 180px; margin-right: 3px; padding-left: 10px; }
.tab-c { width: 180px; padding-left: 9px; background: #fff; color: #111; height: 29px; }
.tab-360 { width: 9px; height: 18px; margin-right: 2px; }
.tab-ie { width: 18px; height: 18px; margin-right: 2px; }
.tab-t { overflow: hidden; -webkit-mask-image: linear-gradient(90deg, #000 88%, transparent); mask-image: linear-gradient(90deg, #000 88%, transparent); }
.tab-t-a { width: 125px; }
.tab-t-b { width: 127px; }
.tab-t-c { width: 127px; }
.x { margin-left: 2px; font: 17px/1 "Liberation Sans", sans-serif; color: #888; }
.tab-plus { font: bold 20px/26px "Liberation Sans", sans-serif; color: #777; margin-left: 5px; height: 28px; }
.tab-restore { width: 15px; height: 15px; margin: 0 0 7px 12px; }
.cad-a { width: 577px; height: 368px; }
.red { fill: none; stroke: #d01018; }
.cy { fill: none; stroke: #25b8b0; }
.sal { fill: none; stroke: #a87060; }
.gr { fill: none; stroke: #c8c8c8; }
.dash { stroke-dasharray: 8 4; }
.gn { fill: none; stroke: #1eb030; }
.t-w { fill: #d8d8d8; font: 11px "Liberation Sans", "Noto Sans CJK SC", sans-serif; }
.t-sal { fill: #d8a088; font: 15px "Liberation Sans", sans-serif; }
.t-sal2 { fill: #d49a80; font: 15px "Noto Sans CJK SC", sans-serif; }
.t-dim { fill: #e4e4e4; font: 12px "Liberation Sans", sans-serif; }

.react-row { display: flex; gap: 43px; padding: 38px 0 0 202px; height: 143px; border-bottom: 1px solid #ddd; }
.react { display: flex; flex-direction: column; align-items: center; width: 67px; flex: none; }
.disc { display: flex; flex-direction: column; align-items: center; width: 67px; height: 68px; border-radius: 50%; padding-top: 10px; }
.react-ic { width: 18px; height: 18px; }
.warn-ic { width: 26px; height: 24px; }
.zero { font: 300 22px/26px "Open Sans", sans-serif; margin-top: 2px; }
.react-lbl { font-size: 18px; line-height: 24px; margin-top: 11px; white-space: nowrap; }
.r-pink { color: #e2607a; } .r-pink .disc { background: #ffd8de; }
.r-yel { color: #dfa845; } .r-yel .disc { background: #fdecc8; }
.r-blu { color: #4a9ad8; } .r-blu .disc { background: #d2edff; }
.r-grn { color: #4fae68; } .r-grn .disc { background: #dcf6df; }
.empty-band { height: 61px; border-bottom: 1px solid #e8e8e8; }
.civil { margin: 19px 0 0 53px; font: 16px/24px "Noto Sans CJK TC", "Noto Sans CJK SC", sans-serif; color: #e05a70; white-space: nowrap; }

.float-btns { position: absolute; left: 1295px; top: 510px; display: flex; flex-direction: column; gap: 10px; }
.fb { display: block; width: 40px; height: 40px; color: #fff; font-size: 14px; line-height: 18px; padding: 0 0 0 6px; }
.fb-top { background: #b4b4b4; padding: 11px 0 0 10px; }
.fb-top svg { width: 22px; height: 18px; }
.fb-or { background: #ff6600; }

/* dialog */
.dialog { position: absolute; left: 0; top: 263px; width: 804px; height: 430px; display: flex; flex-direction: column; background: #ece9d8; border-right: 4px solid #0a37b0; border-top: 1px solid #4a90f0; border-radius: 0 6px 0 0; overflow: hidden; }
.dlg-title { display: flex; align-items: center; justify-content: flex-end; gap: 2px; height: 28px; padding-right: 2px; background: linear-gradient(#1a68e8 0, #0a55e0 30%, #0a50d8 80%, #0846c0 100%); }
.wbtn { display: flex; align-items: center; justify-content: center; width: 20px; height: 20px; background: linear-gradient(135deg, #6a9af0, #2858d0); border: 1px solid #e8f0ff; border-radius: 3px; color: #fff; font: bold 13px "DejaVu Sans", sans-serif; }
.wbtn-x { background: linear-gradient(135deg, #f0a080, #d84020); }
.wb-min { width: 7px; height: 3px; margin-top: 8px; margin-right: 3px; background: #fff; }
.wb-max { width: 12px; height: 11px; border: 1px solid #fff; border-top-width: 3px; }
.dlg-body { display: flex; flex: 1; min-height: 0; }
.pick { display: flex; width: 103px; flex: none; border-right: 3px solid #dcd9c8; padding-top: 17px; background: #f1eee0; }
.thumbs { display: flex; flex-direction: column; gap: 9px; width: 83px; padding-top: 5px; flex: none; }
.thumb { width: 76px; height: 141px; background: #6b8ca6; box-shadow: 1px 1px 0 #c8c5b4, 2px 2px 0 #fff; overflow: hidden; flex: none; }
.thumb-last { height: 79px; }
.thumb svg { width: 76px; height: 100%; }
.vscroll { width: 15px; display: flex; flex-direction: column; gap: 3px; background: #faf9f4; }
.vs-up { display: flex; align-items: center; justify-content: center; height: 14px; background: linear-gradient(90deg, #c6d6f8, #e6eeff); border: 1px solid #b4c8ee; border-radius: 2px; }
.vs-up svg { width: 10px; height: 6px; }
.vs-thumb { display: flex; align-items: center; justify-content: center; height: 157px; background: linear-gradient(90deg, #c0d0f8, #dce6fc); border: 1px solid #aac0ea; border-radius: 2px; }
.vs-thumb i { width: 7px; height: 7px; border-top: 1px solid #8aa0d0; border-bottom: 1px solid #8aa0d0; background: linear-gradient(#8aa0d0, #8aa0d0) center/100% 1px no-repeat; }
.dlg-main { flex: 1; min-width: 0; display: flex; flex-direction: column; }
.radios { display: flex; align-items: center; height: 30px; padding: 4px 0 0 171px; gap: 134px; flex: none; border-bottom: 1px solid #fff; }
.radio { display: flex; align-items: center; gap: 3px; }
.rd { width: 13px; height: 13px; border-radius: 50%; border: 1px solid #4a6a8c; background: #f4f4ee; position: relative; }
.rd-on::after { content: ""; position: absolute; left: 3px; top: 3px; width: 5px; height: 5px; border-radius: 50%; background: #3aa040; }
.cad-b { width: 697px; height: 371px; }
.wl { fill: none; stroke: #fff; }
.magenta { fill: none; stroke: #e030d0; stroke-width: 1.6; }
.lgreen { fill: none; stroke: #20e020; stroke-width: 1.4; }
.cyan2 { fill: none; stroke: #30d8e8; stroke-width: 1.6; }
.yellow { fill: none; stroke: #f0e830; stroke-width: 1.6; }
.red2 { fill: none; stroke: #b81818; stroke-width: 2; }
.red3 { fill: none; stroke: #c81818; stroke-width: 2.2; }
.dots { fill: none; stroke: #40d0e0; stroke-width: 2; stroke-dasharray: 2 7; }
.t-ser { fill: #fff; font: 30px "Liberation Serif", serif; }
.t-ser11 { fill: #fff; font: 28px "Liberation Serif", serif; letter-spacing: 1px; }
.g-dim { fill: #30d030; font: 12px "Liberation Sans", sans-serif; }
.w-title { fill: #fff; font: 30px "Noto Sans CJK SC", sans-serif; }
.w-t2 { fill: #fff; font: 24px "Noto Sans CJK SC", sans-serif; }
.w-t3 { fill: #fff; font: 30px "Liberation Serif", serif; }
.w-cn { fill: #fff; font: 13px "Noto Sans CJK SC", sans-serif; }
.g-cn { fill: #30d030; font: 12px "Liberation Mono", monospace; }
.t-node { fill: #b8b8b8; font: 11px "Noto Sans CJK SC", sans-serif; }
.lime { fill: none; stroke: #cfe040; }
.lime2 { fill: none; stroke: #a6b878; }
.hatch { fill: #a9a868; stroke: #a6b878; }
.cw1 { fill: none; stroke: #fff; }
.bk { fill: none; stroke: #10202c; }
.t-th { fill: #dfe6ea; font: bold 8px "Liberation Serif", serif; }
.t-cap { fill: #34445e; font: 12px "Noto Sans CJK SC", sans-serif; }
.t-big { fill: #3a4a7a; font: 20px "Noto Sans CJK SC", sans-serif; }
.t-a { fill: #e8eef0; font: 15px "Liberation Serif", serif; }
.ic-a { fill: #2a5ab0; font: bold 9px "Liberation Sans", sans-serif; }
.ic-az-a { fill: #2a5ab0; font: bold 9px "Liberation Sans", sans-serif; }
.ic-az-z { fill: #c03030; font: bold 9px "Liberation Sans", sans-serif; }
.ic-2345 { fill: #c03030; font: bold 7px "Liberation Sans", sans-serif; }

.arrows { position: absolute; left: 0; top: 0; width: 1330px; height: 693px; pointer-events: none; }
.ar { fill: none; stroke: #e8000c; stroke-width: 3.6; }
.arh { fill: #e8000c; }
```
